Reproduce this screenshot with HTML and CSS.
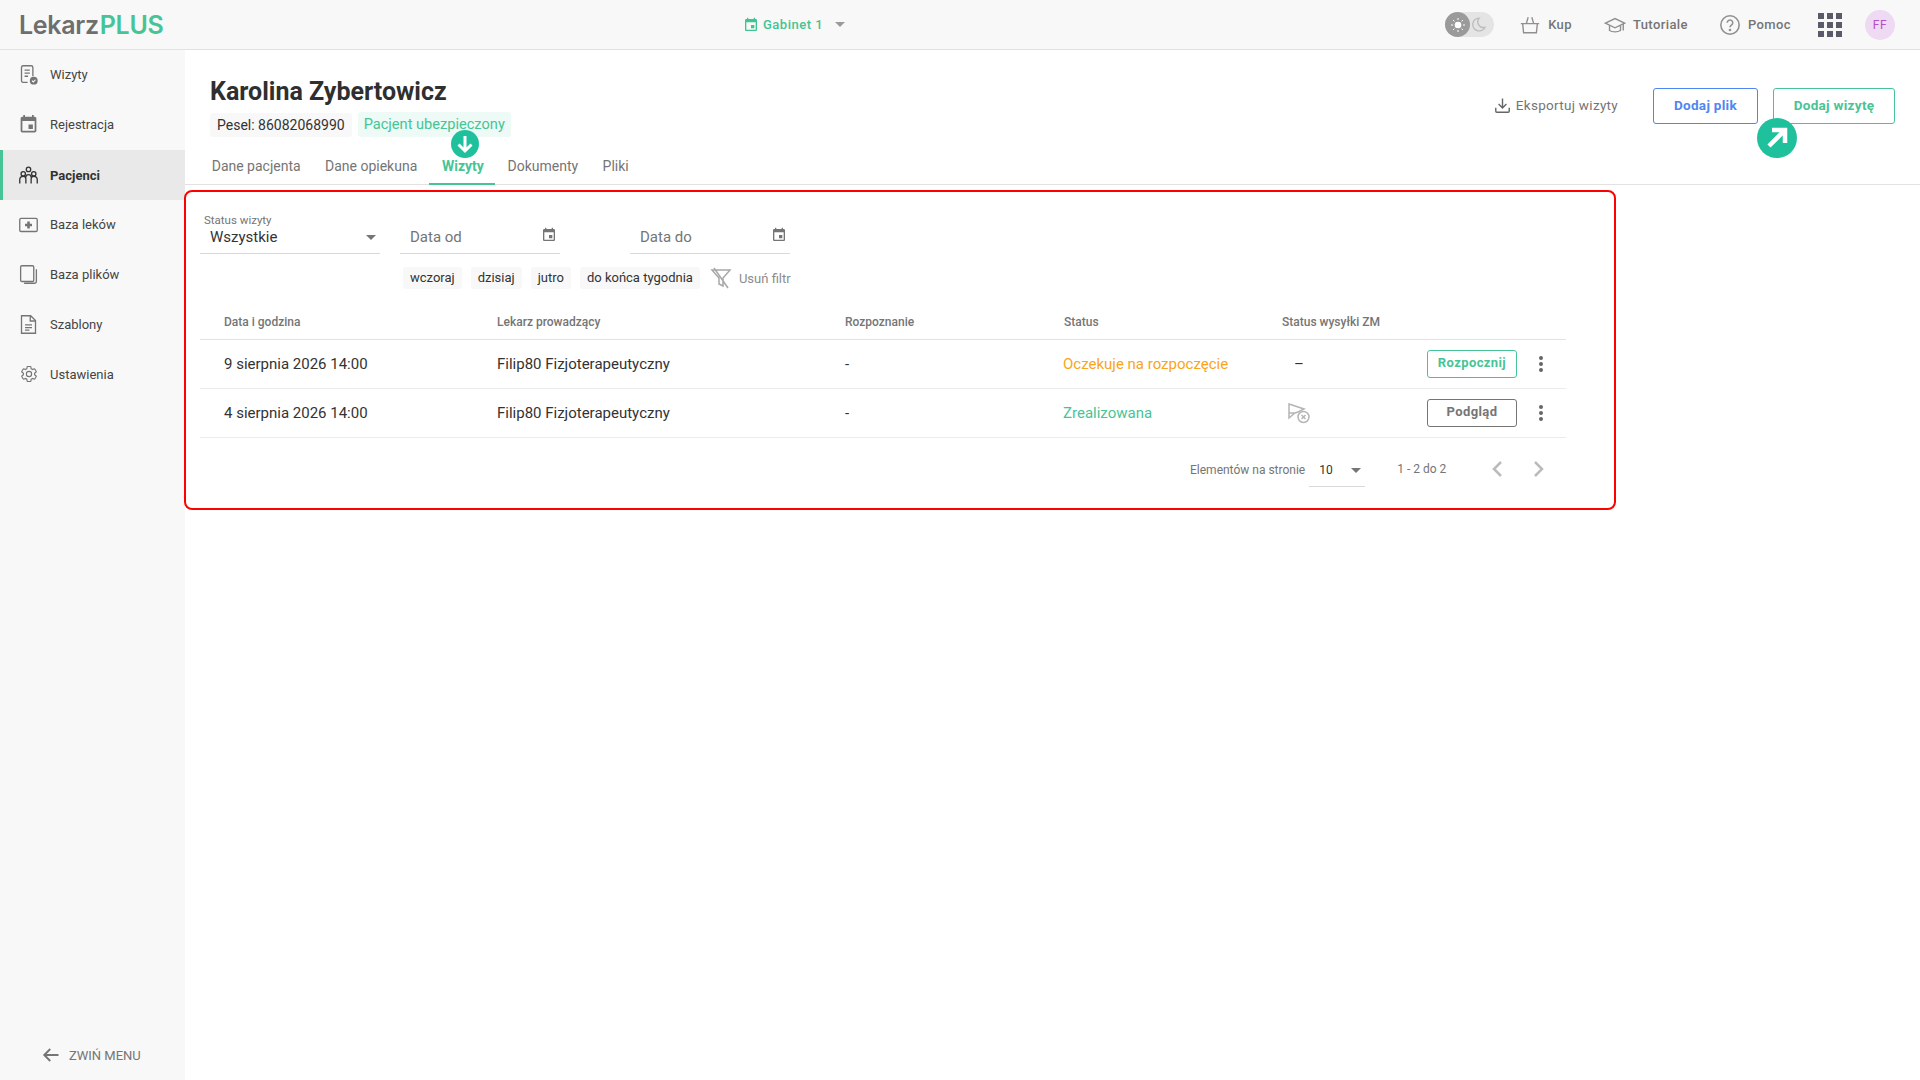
FILE: index.html
```html
<!doctype html>
<html lang="pl">
<head>
<meta charset="utf-8">
<title>LekarzPLUS - Karolina Zybertowicz</title>
<link rel="stylesheet" href="styles.css">
</head>
<body>

<svg class="sprite" width="0" height="0">
  <symbol id="cal" viewBox="0 0 24 24"><path d="M17 12h-5v5h5v-5zM16 1v2H8V1H6v2H5c-1.11 0-1.99.9-1.99 2L3 19c0 1.1.89 2 2 2h14c1.1 0 2-.9 2-2V5c0-1.1-.9-2-2-2h-1V1h-2zm3 18H5V8h14v11z"/></symbol>
</svg>

<!-- top bar -->
<header class="topbar">
  <div class="logo">Lekarz<span>PLUS</span></div>
  <div class="clinic">
    <svg class="clinic-icon" viewBox="0 0 24 24"><use href="#cal"/></svg>
    <span>Gabinet 1</span>
    <i class="caret"></i>
  </div>
  <div class="top-right">
    <div class="theme">
      <span class="theme-on">
        <svg viewBox="0 0 24 24" width="16" height="16" fill="#fff"><circle cx="12" cy="12" r="5"/><path d="M12 1.5v3M12 19.500v3M1.500 12h3M19.500 12h3M4.600 4.600l2 2M17.400 17.400l2 2M4.600 19.400l2-2M17.400 6.600l2-2" stroke="#fff" stroke-width="1.500"/></svg>
      </span>
      <svg class="theme-off" viewBox="0 0 24 24" width="17" height="17"><path d="M13 3a9 9 0 1 0 8 13 8 8 0 0 1-8-13z" fill="none" stroke="#bdbdbd" stroke-width="2"/></svg>
    </div>
    <a class="top-link link-kup">
      <svg viewBox="0 0 24 24" width="22" height="22" fill="none" stroke="#8f8f8f" stroke-width="1.500"><path d="M2 10.500h20M4 10.500l1 10h14l1-10M8 10.500l2-7M16 10.500l-2-7"/></svg>
      Kup
    </a>
    <a class="top-link link-tut">
      <svg viewBox="0 0 24 24" width="22" height="22" fill="none" stroke="#8f8f8f" stroke-width="1.500"><path d="M1.500 10L12 5l10.500 5L12 15z"/><path d="M6 12.500v5.500c3 2 9 2 12 0v-5.500M21 11v7"/></svg>
      Tutoriale
    </a>
    <a class="top-link link-help">
      <svg viewBox="0 0 24 24" width="22" height="22" fill="none" stroke="#8f8f8f" stroke-width="1.700"><circle cx="12" cy="12" r="10"/><path d="M9 9.500a3 3 0 1 1 4.500 2.600c-1 .6-1.500 1.200-1.500 2.400"/><circle cx="12" cy="17.500" r=".6"/></svg>
      Pomoc
    </a>
    <div class="apps">
      <i></i><i></i><i></i><i></i><i></i><i></i><i></i><i></i><i></i>
    </div>
    <div class="avatar">FF</div>
  </div>
</header>

<div class="layout">

  <!-- side menu -->
  <nav class="sidebar">
    <a class="nav-item">
      <svg viewBox="0 0 24 24" fill="none" stroke="#757575" stroke-width="1.500"><path d="M11 21H6a2 2 0 0 1-2-2V4a2 2 0 0 1 2-2h9a2 2 0 0 1 2 2v10"/><path d="M7.500 7h6M7.500 10.500h6M7.500 14h4"/><circle cx="18" cy="19" r="4.500" fill="#757575" stroke="none"/><path d="M16 19l1.500 1.500 2.500-2.500" stroke="#fff" stroke-width="1.200"/></svg>
      Wizyty
    </a>
    <a class="nav-item">
      <svg viewBox="0 0 24 24" fill="#757575"><use href="#cal"/></svg>
      Rejestracja
    </a>
    <a class="nav-item active">
      <svg viewBox="0 0 24 24" fill="none" stroke="#333" stroke-width="1.500"><circle cx="12" cy="5" r="2.500"/><circle cx="6" cy="10" r="2.500"/><circle cx="18" cy="10" r="2.500"/><path d="M2 21v-4c0-2 1.500-4 4-4s3 1 3 3v5M22 21v-4c0-2-1.500-4-4-4s-3 1-3 3v5M9 14c0-4 6-4 6 0"/></svg>
      Pacjenci
    </a>
    <a class="nav-item">
      <svg viewBox="0 0 24 24" fill="none" stroke="#757575" stroke-width="1.500"><rect x="2" y="5" width="20" height="15" rx="1.500"/><path d="M12 8.500v8M8 12.500h8" stroke-width="3"/></svg>
      Baza leków
    </a>
    <a class="nav-item">
      <svg viewBox="0 0 24 24" fill="none" stroke="#757575" stroke-width="1.500"><rect x="3" y="2" width="15" height="18" rx="1.500"/><path d="M21 6v14a2 2 0 0 1-2 2H7"/></svg>
      Baza plików
    </a>
    <a class="nav-item">
      <svg viewBox="0 0 24 24" fill="none" stroke="#757575" stroke-width="1.500"><path d="M4 2h10.500L20 7.500V22H4z"/><path d="M14 2v6h6M8 12.500h8M8 15.500h8M8 18.500h5"/></svg>
      Szablony
    </a>
    <a class="nav-item">
      <svg class="nav-gear" viewBox="0 0 24 24" fill="none" stroke="#757575" stroke-width="1.500"><path d="M19.430 12.980c.04-.32.07-.64.07-.98 0-.34-.03-.66-.07-.98l2.110-1.650c.19-.15.24-.42.12-.64l-2-3.460c-.09-.16-.26-.25-.44-.25-.06 0-.12.01-.17.03l-2.490 1c-.52-.4-1.080-.73-1.690-.98l-.38-2.650C14.460 2.180 14.250 2 14 2h-4c-.25 0-.46.18-.49.42l-.38 2.650c-.61.25-1.170.59-1.690.98l-2.490-1c-.06-.02-.12-.03-.18-.03-.17 0-.34.09-.43.25l-2 3.460c-.13.22-.07.49.12.64l2.110 1.650c-.04.32-.07.65-.07.98 0 .33.03.66.07.98l-2.110 1.650c-.19.15-.24.42-.12.64l2 3.460c.09.16.26.25.44.25.06 0 .12-.01.17-.03l2.490-1c.52.4 1.080.73 1.690.98l.38 2.650c.03.24.24.42.49.42h4c.25 0 .46-.18.49-.42l.38-2.650c.61-.25 1.170-.59 1.690-.98l2.490 1c.06.02.12.03.18.03.17 0 .34-.09.43-.25l2-3.460c.12-.22.07-.49-.12-.64l-2.110-1.650z"/><circle cx="12" cy="12" r="3.500"/></svg>
      Ustawienia
    </a>
    <a class="collapse">
      <svg viewBox="0 0 24 24" width="18" height="18" fill="none" stroke="#757575" stroke-width="2.500"><path d="M22 12H3M11 4l-8 8 8 8"/></svg>
      ZWIŃ MENU
    </a>
  </nav>

  <main class="content">

    <div class="patient-head">
      <div>
        <h1 class="patient-name">Karolina Zybertowicz</h1>
        <div class="patient-tags">
          <span class="tag">Pesel: 86082068990</span>
          <span class="tag tag-green">Pacjent ubezpieczony</span>
        </div>
      </div>
      <div class="head-actions">
        <a class="export">
          <svg viewBox="0 0 24 24" width="17" height="17" fill="none" stroke="#666" stroke-width="2"><path d="M12 2v13M6.500 10l5.500 5.500 5.500-5.500M2.500 15v5a1.500 1.500 0 0 0 1.500 1.500h16a1.500 1.500 0 0 0 1.500-1.500v-5"/></svg>
          Eksportuj wizyty
        </a>
        <button class="btn btn-blue">Dodaj plik</button>
        <button class="btn btn-green">Dodaj wizytę</button>
      </div>
    </div>

    <div class="tabs">
      <a class="tab">Dane pacjenta</a>
      <a class="tab">Dane opiekuna</a>
      <a class="tab active">Wizyty</a>
      <a class="tab">Dokumenty</a>
      <a class="tab">Pliki</a>
    </div>

    <!-- tutorial pointers -->
    <div class="pointer pointer-down">
      <svg viewBox="0 0 28 28" width="28" height="28" fill="none" stroke="#fff" stroke-width="3"><path d="M14 6v15M7.500 14.500L14 21l6.500-6.500"/></svg>
    </div>
    <div class="pointer pointer-up">
      <svg viewBox="0 0 40 40" width="40" height="40" fill="none" stroke="#fff" stroke-width="4.500"><path d="M12 28L27 13M15 12h13v13"/></svg>
    </div>

    <section class="visits">
      <div class="filters">
        <div class="field field-status">
          <label class="field-label">Status wizyty</label>
          <div class="field-value">Wszystkie<i class="caret"></i></div>
        </div>
        <div class="field field-date">
          <div class="field-value placeholder">Data od
            <svg class="date-icon" viewBox="0 0 24 24"><use href="#cal"/></svg>
          </div>
        </div>
        <div class="field field-date">
          <div class="field-value placeholder">Data do
            <svg class="date-icon" viewBox="0 0 24 24"><use href="#cal"/></svg>
          </div>
        </div>
      </div>

      <div class="quick">
        <span class="chip">wczoraj</span>
        <span class="chip">dzisiaj</span>
        <span class="chip">jutro</span>
        <span class="chip">do końca tygodnia</span>
        <a class="clear">
          <svg viewBox="0 0 24 24" width="24" height="24" fill="none" stroke="#a8a8a8" stroke-width="1.500"><path d="M3 4h18l-7 8v8l-4-2v-6zM5 2l14 20"/></svg>
          Usuń filtr
        </a>
      </div>

      <div class="row row-head">
        <div>Data i godzina</div>
        <div>Lekarz prowadzący</div>
        <div>Rozpoznanie</div>
        <div>Status</div>
        <div>Status wysyłki ZM</div>
      </div>

      <div class="row">
        <div>9 sierpnia 2026 14:00</div>
        <div>Filip80 Fizjoterapeutyczny</div>
        <div>-</div>
        <div class="st-wait">Oczekuje na rozpoczęcie</div>
        <div class="send-none">–</div>
        <div class="row-actions">
          <button class="btn-small btn-small-green">Rozpocznij</button>
          <span class="kebab"><i></i><i></i><i></i></span>
        </div>
      </div>

      <div class="row">
        <div>4 sierpnia 2026 14:00</div>
        <div>Filip80 Fizjoterapeutyczny</div>
        <div>-</div>
        <div class="st-done">Zrealizowana</div>
        <div class="send-icon">
          <svg viewBox="0 0 24 24" width="24" height="24" fill="none" stroke="#b5b5b5" stroke-width="1.500"><path d="M2 3l15 5-6 3-3 1-6 5zM8 12H2"/><circle cx="16.500" cy="16" r="5.500" fill="#fff"/><path d="M14.500 14l4 4M18.500 14l-4 4"/></svg>
        </div>
        <div class="row-actions">
          <button class="btn-small btn-small-gray">Podgląd</button>
          <span class="kebab"><i></i><i></i><i></i></span>
        </div>
      </div>

      <div class="pager">
        <span class="pager-label">Elementów na stronie</span>
        <div class="pager-select">10<i class="caret"></i></div>
        <span class="pager-range">1 - 2 do 2</span>
        <svg class="chev" viewBox="0 0 24 24" width="24" height="24"><path d="M15 5l-7 7 7 7"/></svg>
        <svg class="chev" viewBox="0 0 24 24" width="24" height="24"><path d="M9 5l7 7-7 7"/></svg>
      </div>
    </section>
  </main>
</div>

</body>
</html>
```
FILE: styles.css
```css
* {
  box-sizing: border-box;
}
html, body {
  margin: 0;
  height: 100%;
}
body {
  font-family: Roboto, "Liberation Sans", sans-serif;
  font-size: 14px;
  color: #333333;
  background-color: #ffffff;
  overflow: hidden;
}
.sprite {
  position: absolute;
}
.caret {
  display: inline-block;
  width: 0;
  height: 0;
  border-left: 5px solid transparent;
  border-right: 5px solid transparent;
  border-top: 5px solid #757575;
}

/* top bar */
.topbar {
  position: relative;
  display: flex;
  align-items: center;
  height: 50px;
  padding-left: 19px;
  background-color: #f8f8f8;
  border-bottom: 1px solid #e2e2e2;
}
.logo {
  font-family: Inter, sans-serif;
  font-size: 25px;
  font-weight: 600;
  color: #6e6e6e;
  letter-spacing: -0.3px;
}
.logo span {
  color: #47c496;
  margin-left: 1px;
}
.clinic {
  position: absolute;
  left: 743px;
  top: 0;
  height: 49px;
  display: flex;
  align-items: center;
  color: #3fc594;
  font-size: 13px;
  font-weight: 500;
  letter-spacing: 0.5px;
}
.clinic-icon {
  width: 16px;
  height: 16px;
  fill: #3fc594;
  margin-right: 4px;
}
.clinic .caret {
  margin-left: 12px;
  border-top-color: #9a9a9a;
}
.top-right {
  margin-left: auto;
  display: flex;
  align-items: center;
  padding-right: 25px;
}
.theme {
  display: flex;
  align-items: center;
  width: 49px;
  height: 25px;
  border-radius: 13px;
  background-color: #e4e4e4;
  margin-right: 25px;
}
.theme-on {
  display: flex;
  align-items: center;
  justify-content: center;
  width: 25px;
  height: 25px;
  border-radius: 50%;
  background-color: #9a9a9a;
}
.top-link {
  display: flex;
  align-items: center;
  gap: 7px;
  font-size: 13px;
  font-weight: 500;
  color: #757575;
  letter-spacing: 0.4px;
}
.link-kup {
  margin-right: 32px;
}
.link-tut {
  margin-right: 31px;
}
.link-help {
  margin-right: 27px;
}
.apps {
  display: grid;
  grid-template-columns: repeat(3, 6px);
  grid-auto-rows: 6px;
  gap: 3px;
  margin-right: 23px;
}
.apps i {
  background-color: #5a5a68;
}
.avatar {
  width: 30px;
  height: 30px;
  border-radius: 50%;
  background-color: #eedaf3;
  color: #b44fc9;
  font-size: 12px;
  letter-spacing: 0.5px;
  text-align: center;
  line-height: 30px;
}

/* layout */
.layout {
  display: flex;
  height: 1030px;
}
.sidebar {
  flex: 0 0 185px;
  display: flex;
  flex-direction: column;
  background-color: #f8f8f8;
}
.nav-item {
  display: flex;
  align-items: center;
  height: 50px;
  padding-left: 18px;
  padding-bottom: 2px;
  gap: 11px;
  font-size: 13px;
  color: #444444;
}
.nav-item svg {
  width: 21px;
  height: 21px;
}
.nav-item .nav-gear {
  width: 18px;
  height: 18px;
  margin: 0 1.500px 0 1.500px;
}
.nav-item.active {
  padding-left: 15px;
  padding-bottom: 0;
  border-left: 3px solid #47c496;
  background-color: #e9e9e9;
  font-weight: 700;
  color: #333333;
}
.collapse {
  margin-top: auto;
  margin-bottom: 16px;
  padding-left: 42px;
  display: flex;
  align-items: center;
  gap: 9px;
  font-size: 13px;
  color: #757575;
}

/* patient header */
.content {
  position: relative;
  flex: 1;
}
.patient-head {
  display: flex;
  justify-content: space-between;
  padding: 26px 25px 0 25px;
}
.patient-name {
  margin: 0;
  font-size: 25px;
  line-height: 32px;
  font-weight: 700;
  color: #2f2f2f;
}
.patient-tags {
  display: flex;
  gap: 6px;
  margin-top: 4px;
  align-items: center;
}
.tag {
  padding: 0 7px;
  height: 24px;
  line-height: 24px;
  font-size: 14px;
  border-radius: 3px;
  background-color: #f8f8f8;
}
.tag-green {
  height: 25px;
  font-size: 14.600px;
  padding: 0 6px;
  background-color: #edfaf5;
  color: #47c496;
}
.head-actions {
  display: flex;
  align-items: center;
  margin-top: 12px;
  height: 36px;
}
.export {
  display: flex;
  align-items: center;
  gap: 5px;
  margin-right: 35px;
  padding-bottom: 2px;
  font-size: 13.500px;
  color: #757575;
  letter-spacing: 0.3px;
}
.btn {
  height: 36px;
  padding-bottom: 3px;
  border-radius: 3px;
  background-color: #ffffff;
  font-family: Roboto, sans-serif;
  font-size: 13.500px;
  font-weight: 700;
  letter-spacing: 0.3px;
}
.btn-blue {
  width: 105px;
  border: 1px solid #4f86f0;
  color: #4f86f0;
  margin-right: 15px;
}
.btn-green {
  width: 122px;
  border: 1px solid #47c496;
  color: #47c496;
}

/* tabs */
.tabs {
  display: flex;
  height: 48px;
  padding-left: 14.500px;
  align-items: stretch;
  border-bottom: 1px solid #e2e2e2;
}
.tab {
  display: flex;
  align-items: center;
  padding: 11px 12.200px 0;
  color: #757575;
  font-size: 14px;
}
.tab.active {
  padding-left: 12.500px;
  padding-right: 11.500px;
  color: #47c496;
  font-weight: 700;
  border-bottom: 2px solid #47c496;
  margin-bottom: -1px;
}

/* green circles laid over the page */
.pointer {
  position: absolute;
  display: flex;
  align-items: center;
  justify-content: center;
  border-radius: 50%;
  background-color: #1fc19d;
  z-index: 5;
}
.pointer-down {
  left: 266px;
  top: 80px;
  width: 28px;
  height: 28px;
}
.pointer-up {
  left: 1572px;
  top: 68px;
  width: 40px;
  height: 40px;
}

/* marked section */
.visits {
  position: relative;
  width: 1432px;
  height: 320px;
  margin: 5px 0 0 -1px;
  padding: 22px 0 0 14px;
  border: 2px solid #ff0000;
  border-radius: 8px;
  background-color: #ffffff;
}
.filters {
  display: flex;
}
.field {
  height: 40px;
  border-bottom: 1px solid #d9d9d9;
}
.field-status {
  width: 180px;
  margin-right: 20px;
}
.field-date {
  width: 160px;
  margin-right: 70px;
  padding-top: 12px;
}
.field-label {
  display: block;
  margin-left: 4px;
  font-size: 11.500px;
  line-height: 12px;
  color: #757575;
}
.field-value {
  position: relative;
  padding-left: 10px;
  font-size: 15px;
  line-height: 18px;
  color: #333333;
  margin-top: 2px;
}
.field-value .caret {
  position: absolute;
  right: 4px;
  top: 7px;
}
.placeholder {
  color: #757575;
}
.date-icon {
  position: absolute;
  right: 3px;
  top: -1px;
  width: 16px;
  height: 16px;
  fill: #757575;
}
.quick {
  display: flex;
  align-items: center;
  margin-top: 12px;
  padding-left: 203px;
  gap: 9px;
}
.chip {
  height: 22px;
  line-height: 22px;
  padding: 0 7px;
  font-size: 13px;
  border-radius: 3px;
  background-color: #f8f8f8;
  color: #333333;
}
.clear {
  display: flex;
  align-items: center;
  gap: 6px;
  font-size: 13px;
  color: #8c8c8c;
}

/* table */
.row {
  display: grid;
  grid-template-columns: 273px 348px 219px 218px 165px 143px;
  align-items: center;
  width: 1366px;
  height: 49px;
  padding-left: 24px;
  border-bottom: 1px solid #ececec;
  font-size: 15px;
}
.row-head {
  height: 34px;
  margin-top: 16px;
  padding-bottom: 2px;
  border-bottom-color: #e2e2e2;
  font-size: 12px;
  font-weight: 500;
  color: #757575;
}
.st-wait {
  color: #f8a51b;
  margin-left: -1px;
}
.st-done {
  color: #47c496;
  margin-left: -1px;
}
.send-none {
  padding-left: 12px;
}
.send-icon {
  display: flex;
  padding-left: 5px;
}
.row-actions {
  display: flex;
  align-items: center;
  margin-left: -20px;
}
.btn-small {
  width: 90px;
  height: 28px;
  padding-bottom: 4px;
  border-radius: 3px;
  background-color: #ffffff;
  font-family: Roboto, sans-serif;
  font-size: 13px;
  font-weight: 700;
  letter-spacing: 0.4px;
}
.btn-small-green {
  border: 1px solid #47c496;
  color: #47c496;
}
.btn-small-gray {
  border: 1px solid #757575;
  color: #757575;
}
.kebab {
  display: flex;
  flex-direction: column;
  gap: 2px;
  margin-left: 22px;
}
.kebab i {
  width: 4px;
  height: 4px;
  border-radius: 50%;
  background-color: #666666;
}

/* pager */
.pager {
  display: flex;
  align-items: center;
  width: 1366px;
  height: 64px;
  padding-left: 990px;
  font-size: 12px;
  color: #757575;
}
.pager-select {
  position: relative;
  width: 56px;
  height: 33px;
  margin-left: 4px;
  padding: 8px 0 0 10px;
  line-height: 16px;
  color: #333333;
  border-bottom: 1px solid #d9d9d9;
}
.pager-select .caret {
  position: absolute;
  right: 4px;
  top: 14px;
}
.pager-range {
  margin: -3px 0 0 32px;
  width: 73px;
}
.chev {
  fill: none;
  stroke: #bbbbbb;
  stroke-width: 2.500;
  margin: -2px 0 0 16px;
}
```
